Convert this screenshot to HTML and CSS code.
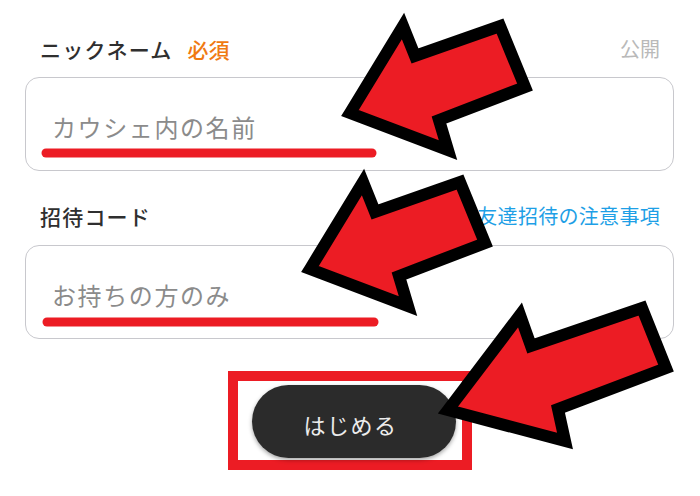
FILE: index.html
```html
<!DOCTYPE html>
<html lang="ja">

<head>
    <meta charset="UTF-8">
    <meta name="viewport" content="width=device-width, initial-scale=1.0">
    <title>カウシェ 登録</title>
    <link rel="stylesheet" href="styles.css">
</head>

<body>
    <div class="page">
        <div class="form">
            <div class="label_row">
                <span class="label">ニックネーム</span>
                <span class="required">必須</span>
                <span class="note">公開</span>
            </div>
            <div class="field">
                <span class="placeholder">カウシェ内の名前</span>
            </div>

            <div class="label_row second">
                <span class="label">招待コード</span>
                <a class="link" href="#">友達招待の注意事項</a>
            </div>
            <div class="field">
                <span class="placeholder">お持ちの方のみ</span>
            </div>

            <div class="actions">
                <div class="highlight">
                    <button class="start">はじめる</button>
                </div>
            </div>
        </div>

        <!-- 注釈（赤線と矢印） -->
        <svg class="marks" width="700" height="496" viewBox="0 0 700 496">
            <line class="underline" x1="46" y1="153" x2="372" y2="153" />
            <line class="underline" x1="47" y1="322" x2="374" y2="322" />
            <polygon class="arrow" points="350,113 403,26 415,56 500,26 525,87 439,120 448,150" />
            <polygon class="arrow" transform="translate(-40 156)" points="350,113 403,26 415,56 500,26 525,87 439,120 448,150" />
            <polygon class="arrow" points="448,410 520,315 531,346 642,308 666,368 558,409 565,441" />
        </svg>
    </div>
</body>

</html>
```

FILE: styles.css
```css
* {
    margin: 0;
    padding: 0;
    box-sizing: border-box;
}

body {
    background: #fff;
    font-family: "Noto Sans CJK JP", "Noto Sans", sans-serif;
    color: #333;
}

.page {
    position: relative;
    width: 700px;
    height: 496px;
    overflow: hidden;
}

.form {
    padding: 35px 26px 0 25px;
}

.label_row {
    display: flex;
    align-items: center;
    height: 28px;
    padding: 0 14px 0 15px;
    font-size: 21px;
    line-height: 28px;
}

.label_row.second {
    margin-top: 31px;
}

.label {
    font-weight: 500;
    color: #2f2f2f;
    letter-spacing: 1.2px;
}

.required {
    margin-left: 15px;
    font-weight: 500;
    color: #f07a12;
}

.note {
    margin-left: auto;
    font-size: 20px;
    color: #b9b9b9;
}

.link {
    margin-left: auto;
    font-size: 20px;
    letter-spacing: .3px;
    color: #1e9fe6;
    text-decoration: none;
}

.field {
    display: flex;
    align-items: center;
    height: 94px;
    margin-top: 14px;
    padding: 4px 0 0 26px;
    border: 1.5px solid #c8c8cd;
    border-radius: 14px;
}

.label_row.second + .field {
    margin-top: 15px;
}

.placeholder {
    font-size: 24px;
    color: #8b8b8b;
    letter-spacing: 1.6px;
}

.actions {
    display: flex;
    justify-content: center;
    margin-top: 32px;
}

.highlight {
    border: 10px solid #ec1c24;
    padding: 4px 6px 2px 14px;
}

.start {
    display: block;
    width: 204px;
    height: 73px;
    border: none;
    border-radius: 37px;
    background: #2b2b2b;
    color: #ececec;
    font-family: inherit;
    font-size: 22px;
    letter-spacing: 1.5px;
    padding: 4px 6px 0 0;
    box-shadow: 0 2px 4px rgba(0, 0, 0, .35);
}

.marks {
    position: absolute;
    top: 0;
    left: 0;
    pointer-events: none;
}

.underline {
    stroke: #ec1c24;
    stroke-width: 9;
    stroke-linecap: round;
}

.arrow {
    fill: #ec1c24;
    stroke: #000;
    stroke-width: 12;
    stroke-linejoin: miter;
    stroke-miterlimit: 10;
}
```
